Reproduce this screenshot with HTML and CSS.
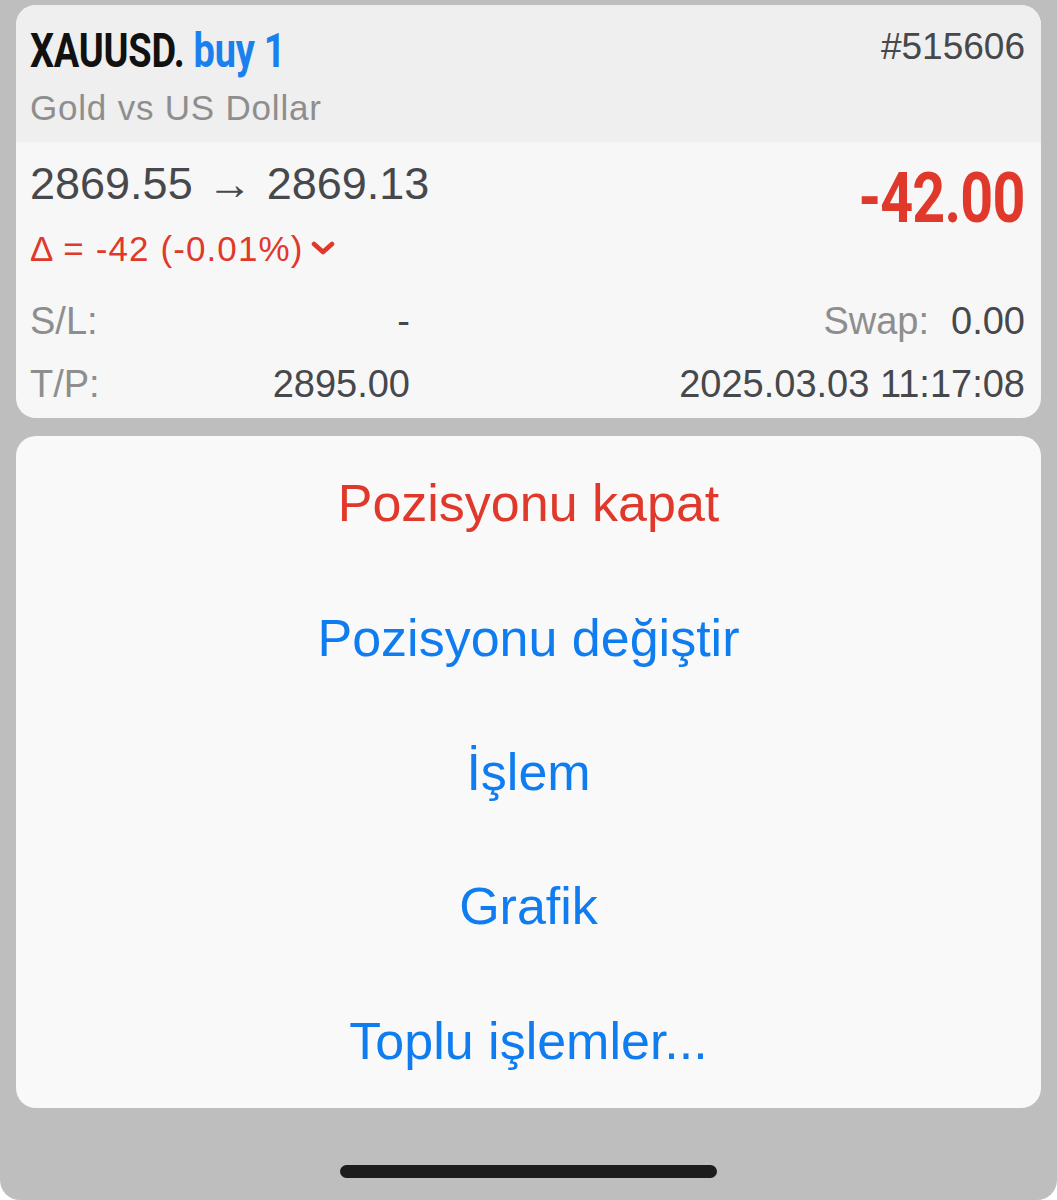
FILE: index.html
```html
<!DOCTYPE html>
<html lang="tr">
<head>
<meta charset="utf-8">
<title>XAUUSD</title>
<link rel="stylesheet" href="styles.css">
</head>
<body>
<div class="screen">
  <section class="card position">
    <header class="pos-head">
      <div class="title-row">
        <span class="title"><span class="sym">XAUUSD.</span> <span class="side">buy 1</span></span>
        <span class="ticket">#515606</span>
      </div>
      <div class="subtitle">Gold vs US Dollar</div>
    </header>
    <div class="pos-body">
      <div class="top">
        <div class="prices">
          <div class="price-line">2869.55 → 2869.13</div>
          <div class="delta-line">Δ = -42 (-0.01%)
            <svg class="chev" width="24" height="14" viewBox="0 0 24 14"><polyline points="3,3 12,11 21,3" fill="none" stroke="#e0392c" stroke-width="4.6" stroke-linecap="round" stroke-linejoin="round"/></svg>
          </div>
        </div>
        <div class="profit"><span class="profit-num">-42.00</span></div>
      </div>
      <div class="row">
        <div class="pair"><span class="lbl">S/L:</span><span class="val">-</span></div>
        <div class="right"><span class="lbl">Swap:</span><span class="val">0.00</span></div>
      </div>
      <div class="row">
        <div class="pair"><span class="lbl">T/P:</span><span class="val">2895.00</span></div>
        <div class="right"><span class="val">2025.03.03 11:17:08</span></div>
      </div>
    </div>
  </section>
  <nav class="card menu">
    <div class="item danger">Pozisyonu kapat</div>
    <div class="item">Pozisyonu değiştir</div>
    <div class="item">İşlem</div>
    <div class="item">Grafik</div>
    <div class="item">Toplu işlemler...</div>
  </nav>
  <div class="home-bar"></div>
</div>
</body>
</html>
```
FILE: styles.css
```css
html, body {
  margin: 0;
  padding: 0;
  background: #ffffff;
}
body {
  font-family: "Liberation Sans", Arial, sans-serif;
  color: #46484c;
}
.screen {
  width: 1057px;
  height: 1200px;
  box-sizing: border-box;
  background: #bebebe;
  padding: 5px 16px 0;
  border-radius: 0 0 20px 20px;
  display: flex;
  flex-direction: column;
}
.card {
  border-radius: 20px;
  overflow: hidden;
}
.position {
  height: 413px;
  display: flex;
  flex-direction: column;
  background: #f7f7f7;
}
.pos-head {
  background: #efefef;
  height: 137px;
  box-sizing: border-box;
  padding: 18px 16px 0 14px;
}
.title-row {
  height: 51px;
  display: flex;
  align-items: center;
  justify-content: space-between;
}
.title {
  display: inline-block;
  font-family: Roboto, "Liberation Sans", sans-serif;
  font-weight: 700;
  font-size: 48px;
  line-height: 51px;
  transform: scaleX(0.79);
  transform-origin: left center;
  white-space: nowrap;
  letter-spacing: -0.3px;
  margin-top: 4px;
}
.sym { color: #111111; }
.side { color: #1a80ee; }
.ticket {
  font-size: 37px;
  line-height: 51px;
  color: #46484c;
  margin-bottom: 4px;
}
.subtitle {
  height: 68px;
  line-height: 68px;
  font-size: 35px;
  letter-spacing: 0.8px;
  color: #8e8e8e;
}
.pos-body {
  flex: 1;
  padding: 12px 16px 0 14px;
}
.top {
  display: flex;
  justify-content: space-between;
  align-items: flex-start;
  height: 129px;
  margin-bottom: 7px;
}
.price-line {
  height: 60px;
  line-height: 60px;
  font-size: 45px;
  word-spacing: 2px;
  color: #46484c;
  white-space: nowrap;
}
.delta-line {
  height: 69px;
  line-height: 69px;
  font-size: 35px;
  letter-spacing: 1.1px;
  color: #e0392c;
  display: flex;
  align-items: center;
}
.chev {
  margin-left: 8px;
  margin-top: -2px;
}
.profit {
  height: 88px;
  line-height: 88px;
}
.profit-num {
  display: inline-block;
  font-family: Roboto, "Liberation Sans", sans-serif;
  font-weight: 700;
  font-size: 70px;
  color: #e0392c;
  transform: scaleX(0.82);
  transform-origin: right center;
  letter-spacing: -1px;
}
.row {
  height: 63px;
  display: flex;
  align-items: center;
  justify-content: space-between;
  font-size: 38px;
}
.pair {
  width: 380px;
  display: flex;
  justify-content: space-between;
}
.right {
  display: flex;
  gap: 22px;
}
.lbl { color: #8e8e8e; }
.val { color: #46484c; }
.menu {
  margin-top: 18px;
  height: 672px;
  background: #f9f9f9;
  display: flex;
  flex-direction: column;
}
.item {
  flex: 1;
  display: flex;
  align-items: center;
  justify-content: center;
  font-size: 52px;
  color: #0f7cf0;
}
.item.danger { color: #e0392c; }
.home-bar {
  width: 377px;
  height: 13px;
  border-radius: 7px;
  background: #1c1c1c;
  margin: 57px auto 0;
}
```
